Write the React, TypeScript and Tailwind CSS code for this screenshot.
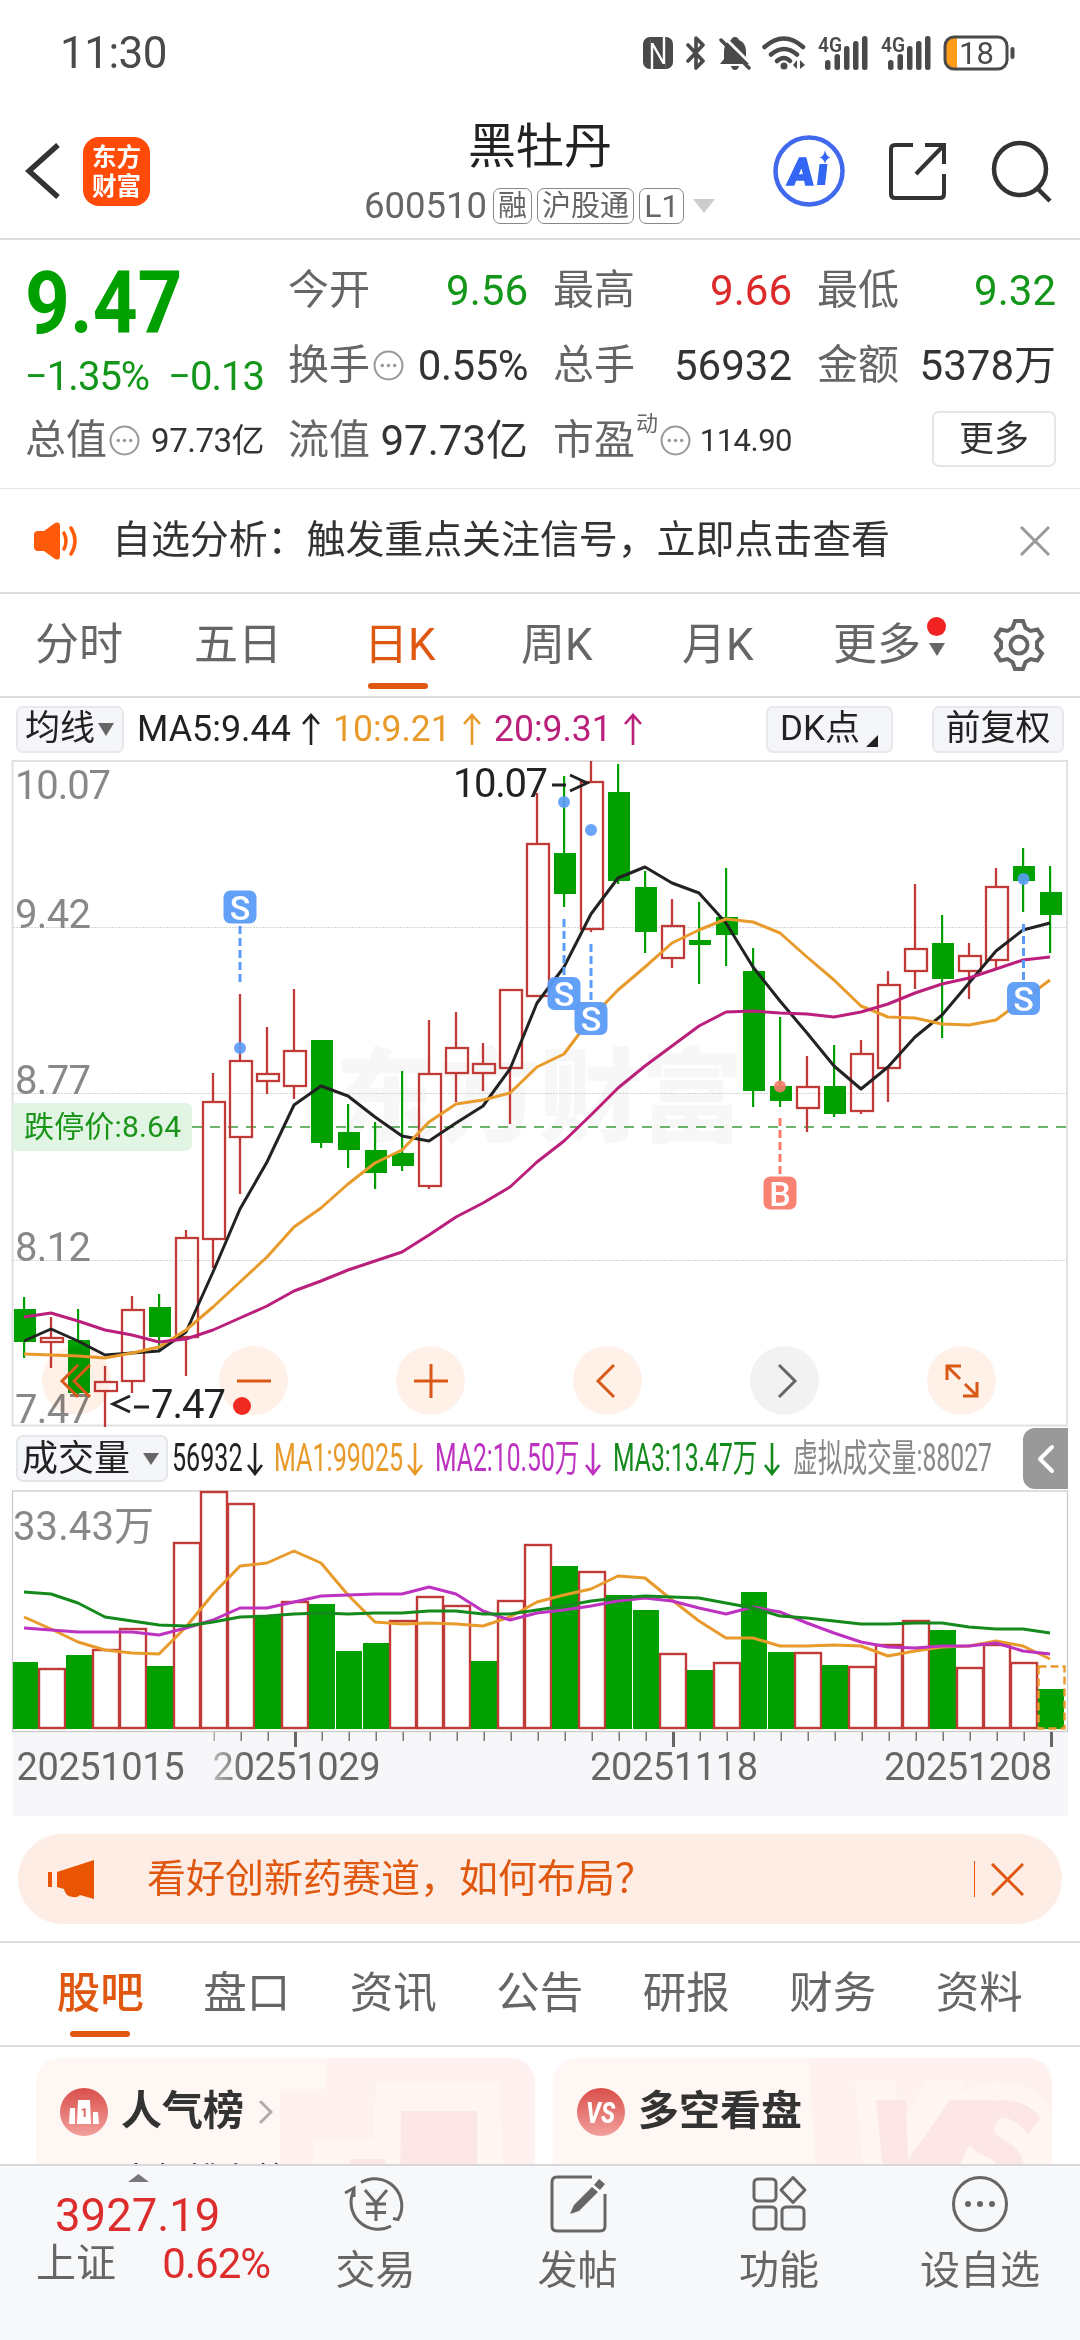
import type { ReactNode } from "react";

const GREEN = "#00a000";
const RED = "#c03a38";

// [kind, body top, body bottom, wick top, wick bottom]
type Candle = ["u" | "d", number, number, number, number];

const candles: Candle[] = [
  ["d", 1309, 1342, 1297, 1358],
  ["u", 1337, 1343, 1317, 1368],
  ["d", 1340, 1393, 1309, 1395],
  ["u", 1381, 1392, 1366, 1427],
  ["u", 1309, 1382, 1296, 1393],
  ["d", 1307, 1337, 1294, 1350],
  ["u", 1237, 1338, 1230, 1376],
  ["u", 1101, 1240, 1073, 1268],
  ["u", 1060, 1138, 994, 1194],
  ["u", 1073, 1082, 1027, 1094],
  ["u", 1050, 1087, 989, 1099],
  ["d", 1040, 1143, 1040, 1148],
  ["d", 1132, 1150, 1104, 1168],
  ["d", 1150, 1173, 1122, 1189],
  ["d", 1153, 1166, 1071, 1171],
  ["u", 1073, 1187, 1020, 1189],
  ["u", 1047, 1074, 1012, 1102],
  ["u", 1063, 1074, 1043, 1091],
  ["u", 989, 1069, 989, 1124],
  ["u", 843, 997, 793, 997],
  ["d", 853, 894, 776, 907],
  ["u", 781, 930, 761, 932],
  ["d", 792, 881, 764, 884],
  ["d", 887, 932, 871, 953],
  ["u", 925, 959, 899, 968],
  ["d", 940, 945, 902, 984],
  ["d", 917, 935, 868, 966],
  ["d", 971, 1091, 948, 1107],
  ["d", 1086, 1101, 1017, 1107],
  ["u", 1086, 1109, 1056, 1132],
  ["d", 1086, 1114, 1045, 1117],
  ["u", 1053, 1112, 1040, 1114],
  ["u", 984, 1069, 971, 1102],
  ["u", 948, 972, 884, 989],
  ["d", 943, 979, 915, 1038],
  ["u", 955, 972, 943, 999],
  ["u", 886, 961, 868, 968],
  ["d", 866, 881, 848, 912],
  ["d", 892, 915, 866, 953],
];

const ma5 = [
  1341, 1329, 1341, 1355, 1353, 1351, 1332, 1272, 1209, 1162, 1105, 1086, 1096,
  1117, 1136, 1141, 1123, 1106, 1069, 1003, 967, 914, 878, 867, 883, 893, 923,
  967, 1001, 1033, 1066, 1089, 1067, 1037, 1015, 983, 951, 930, 923,
];
const ma10 = [
  1354, 1355, 1356, 1358, 1353, 1347, 1330, 1307, 1282, 1257, 1227, 1208, 1184,
  1163, 1150, 1122, 1104, 1100, 1093, 1067, 1054, 1018, 990, 967, 943, 930, 919,
  922, 933, 957, 980, 1006, 1017, 1018, 1024, 1025, 1020, 1000, 980,
];
const ma20 = [
  1317, 1313, 1321, 1330, 1335, 1342, 1339, 1330, 1318, 1306, 1291, 1281, 1270,
  1261, 1252, 1235, 1217, 1203, 1187, 1162, 1141, 1115, 1088, 1066, 1046, 1026,
  1012, 1011, 1013, 1014, 1017, 1012, 1004, 993, 984, 978, 969, 960, 957,
];

const volumes = [
  1662, 1668, 1655, 1649, 1628, 1666, 1542, 1491, 1503, 1615, 1601, 1604, 1651,
  1643, 1620, 1596, 1605, 1661, 1600, 1544, 1566, 1571, 1595, 1610, 1653, 1670,
  1662, 1592, 1652, 1652, 1665, 1666, 1644, 1620, 1630, 1667, 1644, 1662, 1689,
];
// volume bars have their own colours, they do not always follow the candle
const volumeDown = new Set([
  0, 2, 5, 9, 11, 12, 13, 17, 20, 22, 23, 25, 27, 28, 30, 34, 38,
]);
const vma1 = [
  1617, 1629, 1642, 1650, 1653, 1654, 1627, 1594, 1566, 1563, 1551, 1563, 1595,
  1622, 1624, 1623, 1624, 1626, 1617, 1602, 1595, 1589, 1576, 1578, 1600, 1621,
  1638, 1638, 1646, 1646, 1645, 1646, 1656, 1651, 1647, 1646, 1641, 1646, 1659,
];
const vma2 = [
  1628, 1630, 1632, 1632, 1632, 1635, 1628, 1620, 1608, 1608, 1602, 1596, 1595,
  1594, 1594, 1587, 1594, 1611, 1620, 1613, 1610, 1606, 1601, 1598, 1601, 1608,
  1614, 1607, 1612, 1623, 1633, 1642, 1647, 1648, 1646, 1646, 1643, 1651, 1654,
];
const vma3 = [
  1592, 1594, 1603, 1617, 1621, 1625, 1626, 1622, 1617, 1616, 1614, 1613, 1614,
  1613, 1613, 1611, 1611, 1614, 1614, 1610, 1606, 1601, 1598, 1596, 1597, 1598,
  1603, 1608, 1616, 1618, 1621, 1624, 1624, 1623, 1623, 1627, 1629, 1629, 1633,
];

const cx = (i: number) => 24 + 27 * i;
const line = (ys: number[]) => ys.map((y, i) => `${cx(i)},${y}`).join(" ");

function Signal({
  x,
  y,
  dot,
  from,
  to,
  label,
  color,
}: {
  x: number;
  y: number;
  dot: number;
  from: number;
  to: number;
  label: string;
  color: string;
}) {
  return (
    <g>
      <line x1={x} x2={x} y1={from} y2={to} stroke={color} strokeWidth="3" strokeDasharray="8 4" />
      <circle cx={x} cy={dot} r="6" fill={color} opacity="0.9" />
      <rect x={x - 16.5} y={y - 16.5} width="33" height="33" rx="7" fill={color} opacity="0.95" />
      <text x={x} y={y + 12.5} textAnchor="middle" fontSize="34" fontWeight="500" fill="#fff">
        {label}
      </text>
    </g>
  );
}

function PriceChart() {
  return (
    <svg className="block h-[667px] w-[1080px]" viewBox="0 760 1080 667">
      <text x="335" y="1134" fontSize="102" fontWeight="900" fill="#f7f7f7" textLength="408">
        东方财富
      </text>
      <rect x="12.5" y="761" width="1054.5" height="664.5" fill="none" stroke="#e0e0e0" strokeWidth="2" />
      {[927.5, 1093.5, 1260.5].map((y) => (
        <line key={y} x1="13" x2="1067" y1={y} y2={y} stroke="#d4d4d4" strokeDasharray="2 1" strokeWidth="1" />
      ))}
      <line x1="192" x2="1066" y1="1127" y2="1127" stroke="#3d9a3d" strokeWidth="1.4" strokeDasharray="10 8" />

      {candles.map(([kind, top, bottom, high, low], i) =>
        kind === "d" ? (
          <g key={i} fill={GREEN}>
            <rect x={cx(i) - 1} y={high} width="2.2" height={low - high} />
            <rect x={cx(i) - 10} y={top} width="22" height={bottom - top} />
          </g>
        ) : (
          <g key={i} stroke={RED} strokeWidth="2.3" fill="none">
            <line x1={cx(i)} x2={cx(i)} y1={high} y2={top} />
            <line x1={cx(i)} x2={cx(i)} y1={bottom} y2={low} />
            <rect x={cx(i) - 10} y={top + 1} width="22" height={bottom - top - 2} />
          </g>
        ),
      )}

      <g fill="none" strokeWidth="3" strokeLinejoin="round">
        <polyline points={line(ma5)} stroke="#222" />
        <polyline points={line(ma10)} stroke="#e89a2b" />
        <polyline points={line(ma20)} stroke="#ba1f7c" />
      </g>

      <Signal x={240} y={907} dot={1048} from={926} to={982} label="S" color="#5b9bf8" />
      <Signal x={564} y={993.5} dot={802} from={919} to={975} label="S" color="#5b9bf8" />
      <Signal x={591} y={1018.5} dot={830} from={944} to={1000} label="S" color="#5b9bf8" />
      <Signal x={1023.5} y={998.5} dot={879} from={924} to={980} label="S" color="#5b9bf8" />
      <Signal x={780} y={1193} dot={1086.5} from={1118} to={1174} label="B" color="#f97b6b" />

      <g fontSize="40" fill="#888">
        <text x="15" y="799" textLength="96">10.07</text>
        <text x="15" y="927.5" textLength="76">9.42</text>
        <text x="15" y="1093.5" textLength="76">8.77</text>
        <text x="15" y="1260.5" textLength="76">8.12</text>
        <text x="15" y="1422.5" textLength="76">7.47</text>
      </g>
      <text x="453" y="797" fontSize="40" fill="#222" textLength="95">10.07</text>
      <path d="M552 785h14M570 775l17 8-17 8" fill="none" stroke="#222" strokeWidth="3" />
      <path d="M130 1396l-17 8 17 8M134 1407h15" fill="none" stroke="#222" strokeWidth="3" />
      <text x="151" y="1418" fontSize="40" fill="#222" textLength="75">7.47</text>

      <path d="M12.5 1103H185q7 0 7 7v34q0 7-7 7H12.5z" fill="#e2f4e3" />
      <text x="24" y="1137" fontSize="30" fill="#1a951a" textLength="157">跌停价:8.64</text>
    </svg>
  );
}

function RoundButton({ grey, children }: { grey?: boolean; children: ReactNode }) {
  return (
    <div className="relative flex size-[69px] items-center justify-center">
      <div
        className={`absolute inset-0 rounded-full mix-blend-multiply ${grey ? "bg-[#f2f2f2]" : "bg-[#fff0e8]"}`}
      />
      <svg
        className={`relative size-10 ${grey ? "text-[#666]" : "text-[#d95a16]"}`}
        viewBox="0 0 40 40"
        fill="none"
        stroke="currentColor"
        strokeWidth="3"
      >
        {children}
      </svg>
    </div>
  );
}

function VolumeChart() {
  const mid = (i: number) => 25 + 27 * i;
  const majors = [10, 24, 38];
  return (
    <svg className="block h-[326px] w-[1080px]" viewBox="0 1490 1080 326">
      <defs>
        <linearGradient id="fade" gradientUnits="userSpaceOnUse" x1="200" x2="245" y1="0" y2="0">
          <stop offset="0" stopColor="#666" stopOpacity="0.2" />
          <stop offset="1" stopColor="#666" />
        </linearGradient>
      </defs>
      <rect x="12.5" y="1732" width="1055.5" height="84" fill="#f7f7fa" />
      <rect x="12.5" y="1491" width="1055" height="240.5" fill="none" stroke="#c9c9c9" strokeWidth="1.2" />
      {volumes.map((top, i) =>
        volumeDown.has(i) ? (
          <rect key={i} x={Math.max(13, mid(i) - 13)} y={top} width={i === 0 ? 25 : 26} height={1729 - top} fill={GREEN} />
        ) : (
          <rect key={i} x={mid(i) - 13} y={top + 1} width="26" height={1728 - top - 1} fill="none" stroke={RED} strokeWidth="2.4" />
        ),
      )}
      <rect x="1038.5" y="1666.5" width="26" height="62" fill="none" stroke="#e89a2b" strokeWidth="2.4" strokeDasharray="8 4" />
      <g fill="none" strokeWidth="3" strokeLinejoin="round">
        <polyline points={line(vma1)} stroke="#e89a2b" />
        <polyline points={line(vma2)} stroke="#bd32c0" />
        <polyline points={line(vma3)} stroke="#148a1c" />
      </g>
      {volumes.map((_, i) =>
        i < 7 ? null : majors.includes(i) ? (
          <rect key={i} x={mid(i) - 1} y="1732" width="3" height="15" fill="#666" />
        ) : (
          <rect key={i} x={mid(i) - 0.5} y="1732" width="1.5" height="9" fill={i === 7 ? "#aaa" : "#777"} />
        ),
      )}
      <text x="13" y="1540" fontSize="40" fill="#888" textLength="141">33.43万</text>
      <g fontSize="38" fill="#666">
        <text x="16.5" y="1780" textLength="168">20251015</text>
        <text x="212.5" y="1780" textLength="168" fill="url(#fade)">20251029</text>
        <text x="590" y="1780" textLength="168">20251118</text>
        <text x="884" y="1780" textLength="168">20251208</text>
      </g>
    </svg>
  );
}

// Text pressed sideways into the given width.
function Narrow({ box, scale, children }: { box: string; scale: string; children: ReactNode }) {
  return (
    <div className={`whitespace-nowrap ${box}`}>
      <span className={`inline-block origin-left ${scale}`}>{children}</span>
    </div>
  );
}

function Dots() {
  return (
    <svg className="size-[31px] shrink-0" viewBox="0 0 30 30" fill="#999">
      <circle cx="15" cy="15" r="13.5" fill="none" stroke="#999" strokeWidth="2" />
      <circle cx="9" cy="15" r="1.7" />
      <circle cx="15" cy="15" r="1.7" />
      <circle cx="21" cy="15" r="1.7" />
    </svg>
  );
}

function Signal4G() {
  return (
    <svg className="h-[34px] w-[50px] overflow-visible" viewBox="0 0 50 34" fill="#4a4a4a">
      <text x="0" y="15.5" fontSize="21" fontWeight="600" textLength="24" lengthAdjust="spacingAndGlyphs">4G</text>
      <rect x="7" y="24" width="5.5" height="10" rx="2.5" />
      <rect x="16.5" y="18" width="5.5" height="16" rx="2.5" />
      <rect x="26" y="10" width="5.5" height="24" rx="2.5" />
      <rect x="35" y="5" width="5.5" height="29" rx="2.5" />
      <rect x="44" y="0" width="5.5" height="34" rx="2.5" />
    </svg>
  );
}

function StatusBar() {
  return (
    <div className="flex h-[105px] shrink-0 items-center justify-between pr-[64px] pl-[60px] text-[#4a4a4a]">
      <span className="text-[44px] tracking-[-0.5px]">11:30</span>
      <div className="flex items-center">
        <svg className="h-[32px] w-[30px]" viewBox="0 0 30 32">
          <rect width="30" height="32" rx="7" fill="#4a4a4a" />
          <path d="M9 32V6l12 21V0" fill="none" stroke="#fff" strokeWidth="2.4" />
          <path d="M9 0v6M21 27v5" stroke="#4a4a4a" strokeWidth="2.4" />
        </svg>
        <svg className="ml-[13px] h-[34px] w-[20px]" viewBox="0 0 20 34" fill="none" stroke="#4a4a4a" strokeWidth="3.6" strokeLinejoin="round" strokeLinecap="round">
          <path d="M2 9l15 16-7 7V2l7 7L2 25" />
        </svg>
        <svg className="ml-[13px] h-[34px] w-[32px]" viewBox="0 0 32 34" fill="#4a4a4a">
          <path d="M12 4q1-3 4-3t4 3q7 3 7 11v8l4 5H1l4-5v-8q0-8 7-11z" />
          <path d="M12 30h8q-1 4-4 4t-4-4z" />
          <path d="M3 -1l33 33" stroke="#fff" strokeWidth="3" />
          <path d="M2 4l28 28" stroke="#4a4a4a" strokeWidth="3.5" strokeLinecap="round" />
        </svg>
        <svg className="ml-[11px] h-[34px] w-[44px]" viewBox="0 0 44 34" fill="none" stroke="#4a4a4a" strokeWidth="4.5" strokeLinecap="round">
          <path d="M2.5 11Q22-6 41 11M9 18.500q13-11 26 0M15 25q7-6 13 0" />
          <circle cx="22" cy="30" r="3.5" fill="#4a4a4a" stroke="none" />
          <path d="M35 24v9l-4-4zM38 33v-9l5 5z" fill="#4a4a4a" stroke="none" />
        </svg>
        <span className="ml-[12px]"><Signal4G /></span>
        <span className="ml-[13px]"><Signal4G /></span>
        <svg className="ml-[12px] h-[36px] w-[73px]" viewBox="0 0 73 36" fill="none">
          <path d="M14 2h-3Q2 2 2 11v14q0 9 9 9h3z" fill="#ff9c1a" />
          <rect x="2" y="2" width="62" height="32" rx="9" stroke="#4a4a4a" strokeWidth="3" />
          <path d="M69.5 14v8" stroke="#4a4a4a" strokeWidth="4" strokeLinecap="round" />
          <text x="16" y="29" fontSize="31" fill="#4a4a4a">18</text>
        </svg>
      </div>
    </div>
  );
}

function Tag({ children }: { children: ReactNode }) {
  return (
    <span className="flex h-[36px] items-center rounded-[7px] border-[1.5px] border-[#888] px-[4px] text-[29px] leading-none">
      {children}
    </span>
  );
}

function Header() {
  return (
    <div className="flex h-[135px] shrink-0 items-start border-b-2 border-[#dcdcdc] text-[#222]">
      <svg className="mt-[38px] ml-[25px] h-[56px] w-[36px]" viewBox="0 0 36 56" fill="none" stroke="#333" strokeWidth="5.5">
        <path d="M33 2L4 28l29 26" />
      </svg>
      <div className="mt-[32px] ml-[22px] flex h-[69px] w-[67px] flex-col items-center justify-center rounded-[16px] bg-[#ff4a08] text-[24.5px] leading-[29px] font-bold text-white">
        <span>东方</span>
        <span>财富</span>
      </div>
      <div className="ml-[214px] flex w-[353px] flex-col">
        <div className="mt-[10px] ml-[104px] text-[48px] leading-[64px]">黑牡丹</div>
        <div className="mt-[8px] flex h-[38px] items-center gap-[5px] text-[#666]">
          <span className="mr-[1px] text-[36.5px] leading-none">600510</span>
          <Tag>融</Tag>
          <Tag>沪股通</Tag>
          <Tag><span className="text-[32px]">L1</span></Tag>
          <svg className="ml-[4px] h-[14px] w-[22px] shrink-0" viewBox="0 0 22 14" fill="#ccc">
            <path d="M0 0h22L11 14z" />
          </svg>
        </div>
      </div>
      <svg className="mt-[30px] ml-[56px] size-[72px]" viewBox="0 0 72 72">
        <circle cx="36" cy="36" r="33.5" fill="#fff" stroke="#4169ee" strokeWidth="4.5" />
        <text x="14" y="50" fontSize="38" fontWeight="900" fill="#3366f5" stroke="#3366f5" strokeWidth="1.5" textLength="26" lengthAdjust="spacingAndGlyphs" transform="skewX(-6) translate(5 0)">
          A
        </text>
        <path d="M46.5 29h8l-2.500 21h-8z" fill="#3366f5" />
        <path d="M52 15q1 6.500 5.500 7.500-4.500 1-5.500 6.500-1-5.500-5.500-6.500Q51 21.500 52 15z" fill="#3366f5" />
      </svg>
      <svg className="mt-[36px] ml-[43px] size-[60px]" viewBox="0 0 60 60" fill="none" stroke="#333" strokeWidth="4">
        <path d="M25 4H7Q3 4 3 8v45q0 4 4 4h45q4 0 4-4V33" />
        <path d="M37 4h19v19M56 4L28 33" />
      </svg>
      <svg className="mt-[34px] ml-[43px] size-[64px]" viewBox="0 0 64 64" fill="none" stroke="#333" strokeWidth="4.5">
        <circle cx="29" cy="30" r="26" />
        <path d="M46 49l13 13" />
      </svg>
    </div>
  );
}

function Quote() {
  return (
    <div className="flex h-[249px] shrink-0 border-b border-[#e6e6e6] pt-[13px] pl-[25px] text-[42px] leading-[75px] text-[#333]">
      <div className="w-[239px]">
        <div className="h-[97px] pt-[4px] text-[88px] leading-[92px] font-bold text-[#00a000]">
          <Narrow box="w-[160px]" scale="scale-x-[0.89]">9.47</Narrow>
        </div>
        <div className="flex h-[53px] items-center justify-between text-[40px] tracking-[-1px] text-[#14961a]">
          <span>−1.35%</span>
          <span>−0.13</span>
        </div>
        <div className="flex h-[75px] items-center">
          <span className="text-[41px] text-[#666]">总值</span>
          <span className="ml-[2px] flex"><Dots /></span>
          <span className="ml-auto text-[33px] tracking-[-0.5px]">97.73亿</span>
        </div>
      </div>
      <div className="ml-[24px] w-[240px]">
        <div className="flex justify-between">
          <span className="text-[41px] text-[#666]">今开</span>
          <span className="text-[#14961a]">9.56</span>
        </div>
        <div className="flex items-center">
          <span className="text-[41px] text-[#666]">换手</span>
          <span className="ml-[3px] flex"><Dots /></span>
          <span className="ml-auto tracking-[-0.5px]">0.55%</span>
        </div>
        <div className="flex justify-between">
          <span className="text-[41px] text-[#666]">流值</span>
          <span>97.73亿</span>
        </div>
      </div>
      <div className="ml-[25px] w-[239px]">
        <div className="flex justify-between">
          <span className="text-[41px] text-[#666]">最高</span>
          <span className="text-[#dc2a2a]">9.66</span>
        </div>
        <div className="flex justify-between">
          <span className="text-[41px] text-[#666]">总手</span>
          <span>56932</span>
        </div>
        <div className="flex h-[75px] items-center">
          <span className="text-[41px] text-[#666]">市盈</span>
          <span className="mr-[2px] mb-[34px] ml-[1px] text-[22px] leading-none text-[#666]">动</span>
          <Dots />
          <span className="ml-auto text-[31px] tracking-[-0.5px]">114.90</span>
        </div>
      </div>
      <div className="ml-[25px] w-[239px]">
        <div className="flex justify-between">
          <span className="text-[41px] text-[#666]">最低</span>
          <span className="text-[#14961a]">9.32</span>
        </div>
        <div className="flex justify-between">
          <span className="text-[41px] text-[#666]">金额</span>
          <span>5378万</span>
        </div>
        <div className="mt-[8px] ml-auto flex h-[56px] w-[124px] items-center justify-center rounded-[7px] border-2 border-[#e6e6e6] text-[35px]">
          更多
        </div>
      </div>
    </div>
  );
}

function Notice() {
  return (
    <div className="flex h-[105px] shrink-0 items-center border-b-2 border-[#dcdcdc] pr-[30px] pl-[33px]">
      <svg className="h-[38px] w-[46px]" viewBox="0 0 46 38" fill="#ff5a0a">
        <path d="M5 9h6L22 1q5-2 5 3v30q0 5-5 3l-11-8H5q-4 0-4-4V13q0-4 4-4z" />
        <path d="M31 11q4 8 0 16M38 6q8 13 0 26" fill="none" stroke="#ff5a0a" strokeWidth="3.5" strokeLinecap="round" />
      </svg>
      <span className="ml-[33px] text-[39px] tracking-[-0.1px] text-[#333]">自选分析：触发重点关注信号，立即点击查看</span>
      <svg className="ml-auto size-[30px]" viewBox="0 0 30 30" stroke="#999" strokeWidth="3">
        <path d="M1 1l28 28M29 1L1 29" />
      </svg>
    </div>
  );
}

function PeriodTabs() {
  return (
    <div className="flex h-[104px] shrink-0 items-center border-b-2 border-[#dcdcdc] pl-[35px] text-[44px] text-[#666]">
      <span className="w-[159px]">分时</span>
      <span className="w-[170px]">五日</span>
      <div className="relative flex w-[157px] text-[#e0570f]">
        日K
        <div className="absolute -bottom-[11px] left-[4px] h-[6px] w-[60px] rounded-full bg-[#e0570f]" />
      </div>
      <span className="w-[161px]">周K</span>
      <span className="w-[151px]">月K</span>
      <span>更多</span>
      <div className="ml-[6px] flex h-[56px] flex-col items-center">
        <div className="size-[19px] rounded-full bg-[#f02222]" />
        <svg className="mt-[7px] h-[13px] w-[16px]" viewBox="0 0 16 13" fill="#666">
          <path d="M0 0h16L8 13z" />
        </svg>
      </div>
      <svg className="ml-[47px] h-[54px] w-[52px]" viewBox="0 0 52 54" fill="none" stroke="#666" strokeWidth="4">
        <path d="M22 3h8l2.500 7 5 3 7-1.500 4.500 7-5 5.500v6l5 5.500-4.500 7-7-1.500-5 3L30 51h-8l-2.500-7-5-3-7 1.500-4.500-7L8 30v-6l-5-5.500 4.500-7 7 1.500 5-3z" />
        <circle cx="26" cy="27" r="8.5" />
      </svg>
    </div>
  );
}

function MaRow() {
  return (
    <div className="flex h-[62px] shrink-0 items-center px-[16px] text-[37px] whitespace-nowrap">
      <div className="flex h-[47px] w-[108px] items-center rounded-[7px] border-2 border-[#e8e8ec] bg-[#f5f6f9] pl-[7px] text-[35px] text-[#222]">
        均线
        <svg className="ml-[3px] h-[13px] w-[16px]" viewBox="0 0 16 13" fill="#666">
          <path d="M0 0h16L8 13z" />
        </svg>
      </div>
      <div className="ml-[13px] flex w-[196px] items-center text-[#222]">
        <Narrow box="w-[164px]" scale="scale-x-[0.97]">MA5:9.44</Narrow>
        <Arrow up />
      </div>
      <div className="flex w-[161px] items-center text-[#e89a2b]">
        <Narrow box="w-[129px]" scale="scale-x-[0.96]">10:9.21</Narrow>
        <Arrow up />
      </div>
      <div className="flex w-[160px] items-center text-[#ba1f7c]">
        <Narrow box="w-[129px]" scale="scale-x-[0.96]">20:9.31</Narrow>
        <Arrow up />
      </div>
      <div className="ml-auto flex h-[47px] w-[127px] items-center rounded-[7px] border-2 border-[#e8e8ec] bg-[#f5f6f9] pl-[12px] text-[35px] text-[#222]">
        DK点
        <svg className="mt-[24px] ml-[6px] size-[12px]" viewBox="0 0 12 12" fill="#222">
          <path d="M12 0v12H0z" />
        </svg>
      </div>
      <div className="ml-[39px] flex h-[47px] w-[132px] items-center justify-center rounded-[7px] border-2 border-[#e8e8ec] bg-[#f5f6f9] text-[35px] text-[#222]">
        前复权
      </div>
    </div>
  );
}

function Arrow({ up }: { up?: boolean }) {
  return (
    <svg className="h-[34px] w-[20px] shrink-0" viewBox="0 0 20 34" fill="none" stroke="currentColor" strokeWidth="2.600">
      <path d={up ? "M10 33V3M2 12l8-9 8 9" : "M10 1v30M3 23l7 9 7-9"} />
    </svg>
  );
}

function VolumeRow() {
  return (
    <div className="flex h-[63px] shrink-0 items-center pl-[16px] text-[38px] whitespace-nowrap">
      <div className="flex h-[47px] w-[152px] items-center rounded-[7px] border-2 border-[#e4e6ea] bg-[#f5f6f9] pl-[4px] text-[36px] text-[#222]">
        成交量
        <svg className="ml-[13px] h-[12px] w-[16px]" viewBox="0 0 16 12" fill="#666">
          <path d="M0 0h16L8 12z" />
        </svg>
      </div>
      <div className="ml-[4px] flex items-center text-[#222]">
        <Narrow box="w-[73px]" scale="scale-x-[0.66]">56932</Narrow>
        <Arrow />
      </div>
      <div className="ml-[9px] flex items-center text-[#e89a2b]">
        <Narrow box="w-[131px]" scale="scale-x-[0.66]">MA1:99025</Narrow>
        <Arrow />
      </div>
      <div className="ml-[10px] flex items-center text-[#bd32c0]">
        <Narrow box="w-[148px]" scale="scale-x-[0.65]">MA2:10.50万</Narrow>
        <Arrow />
      </div>
      <div className="ml-[10px] flex items-center text-[#148a1c]">
        <Narrow box="w-[149px]" scale="scale-x-[0.65]">MA3:13.47万</Narrow>
        <Arrow />
      </div>
      <div className="ml-[11px] text-[#888]">
        <Narrow box="w-[200px]" scale="scale-x-[0.65]">虚拟成交量:88027</Narrow>
      </div>
      <div className="mr-[12px] ml-auto flex h-[61px] w-[45px] items-center justify-center rounded-l-[12px] bg-[#999]">
        <svg className="h-[30px] w-[18px]" viewBox="0 0 18 30" fill="none" stroke="#fff" strokeWidth="4" strokeLinecap="round" strokeLinejoin="round">
          <path d="M15 3L3 15l12 12" />
        </svg>
      </div>
    </div>
  );
}

function Banner() {
  return (
    <div className="mx-[18px] mt-[18px] flex h-[90px] shrink-0 items-center rounded-full bg-[#fdede4] pr-[38px] pl-[30px] text-[#e0570f]">
      <svg className="h-[39px] w-[46px]" viewBox="0 0 46 39" fill="#ea5504">
        <rect x="0" y="12" width="4" height="15" />
        <path d="M9 12L46 0v39l-14-4q-3 3-7 2-8-1-9-8l-7-2z" />
      </svg>
      <span className="ml-[53px] text-[39px]">看好创新药赛道，如何布局？</span>
      <div className="ml-auto h-[36px] w-[1.5px] bg-[#e0570f]" />
      <svg className="ml-[16px] size-[33px]" viewBox="0 0 33 33" stroke="#e0570f" strokeWidth="3">
        <path d="M1 1l31 31M32 1L1 32" />
      </svg>
    </div>
  );
}

const sections = ["股吧", "盘口", "资讯", "公告", "研报", "财务", "资料"];

function SectionTabs() {
  return (
    <div className="mt-[17px] flex h-[106px] shrink-0 items-center border-y-2 border-[#dcdcdc] px-[27px] text-[43.5px] text-[#666]">
      {sections.map((name, i) => (
        <div
          key={name}
          className={`relative flex w-[146.5px] justify-center ${i === 0 ? "font-medium text-[#e0570f]" : ""}`}
        >
          {name}
          {i === 0 && <div className="absolute -bottom-[10px] h-[6px] w-[60px] rounded-full bg-[#e0570f]" />}
        </div>
      ))}
    </div>
  );
}

function Cards() {
  return (
    <div className="flex h-[117px] shrink-0 gap-[18px] overflow-hidden pt-[11px] pl-[36px] text-[41px] font-bold text-[#333]">
      <div className="relative h-[200px] w-[499px] shrink-0 overflow-hidden rounded-[24px] bg-[#fff7f4]">
        <svg className="absolute inset-0 h-[200px] w-[499px]" viewBox="0 0 499 200">
          <path d="M291 0h208v200H244V31h45z" fill="#fef1ef" />
          <path d="M340 24h124l6 176H278V81h59z" fill="#fff6f3" />
          <path d="M365 53h76v147h-78zM314 101h35v99h-36z" fill="#fce7e6" />
        </svg>
        <div className="relative mt-[30px] ml-[24px] flex h-[48px] items-center">
          <svg className="size-[48px]" viewBox="0 0 48 48">
            <defs>
              <linearGradient id="badge" x1="0" x2="0" y1="0" y2="1">
                <stop offset="0" stopColor="#da4f4a" />
                <stop offset="1" stopColor="#f2a09c" />
              </linearGradient>
            </defs>
            <circle cx="24" cy="24" r="24" fill="url(#badge)" />
            <path d="M10 20h5v16H9zM18 12h12l1 24H17zM33 24h5l1 12h-6z" fill="#fff" />
            <text x="20.5" y="29" fontSize="13" fontWeight="700" fill="#dc6560">1</text>
          </svg>
          <span className="ml-[13px]">人气榜</span>
          <svg className="ml-[15px] h-[24px] w-[14px]" viewBox="0 0 14 24" fill="none" stroke="#b0aaaa" strokeWidth="3" strokeLinecap="round">
            <path d="M2 2l10 10L2 22" />
          </svg>
        </div>
        <div className="relative mt-[24px] ml-[83px] text-[34px] leading-[40px] font-normal">人气排名第</div>
      </div>
      <div className="relative h-[200px] w-[499px] shrink-0 overflow-hidden rounded-[24px] bg-[#fff7f4]">
        <svg className="absolute inset-0 h-[200px] w-[499px]" viewBox="0 0 499 200">
          <path d="M256 0h243v200H268z" fill="#fef1ef" />
          <path d="M302 22h40l4 50 26-50h40l-4 12q30-16 62-6 28 10 29 40v60H312z" fill="#fff6f3" />
          <path d="M323 42h30l2 60 42-60h42l-50 100h-56z" fill="#fce7e6" />
          <path d="M488 60q-14-18-38-18-34 0-36 32-1 16 18 24 16 7 15 18-3 14-22 14-16 0-24-10l-8 30q40 22 66-4 22-22 8-50-6-10-22-18-8-6 0-16 10-8 30 14z" fill="#fce7e6" />
        </svg>
        <div className="relative mt-[30px] ml-[24px] flex h-[48px] items-center">
          <svg className="size-[48px]" viewBox="0 0 48 48">
            <circle cx="24" cy="24" r="24" fill="url(#badge)" />
            <text x="9" y="35" fontSize="29" fontWeight="800" fontStyle="italic" fill="#fff" textLength="29" lengthAdjust="spacingAndGlyphs">VS</text>
          </svg>
          <span className="ml-[13px]">多空看盘</span>
        </div>
      </div>
    </div>
  );
}

function NavItem({ width, label, children }: { width: string; label: string; children: ReactNode }) {
  return (
    <div className={`flex flex-col items-center ${width}`}>
      <svg className="mt-[8px] size-[60px] overflow-visible" viewBox="0 0 60 60" fill="none" stroke="#666" strokeWidth="3">
        {children}
      </svg>
      <span className="mt-[11px] text-[40px] leading-[52px]">{label}</span>
    </div>
  );
}

function BottomBar() {
  return (
    <div className="flex h-[176px] shrink-0 border-t-2 border-[#d8d8da] bg-[#f7f8fa] text-[#666]">
      <div className="w-[274px] pl-[36px]">
        <svg className="mt-[8px] ml-[92px] h-[8px] w-[21px]" viewBox="0 0 21 8" fill="#77777c">
          <path d="M0 8L10.500 0 21 8z" />
        </svg>
        <div className="mt-[9px] ml-[19px] text-[45.5px] leading-[50px] text-[#dc2c2c]">3927.19</div>
        <div className="-mt-[3px] flex justify-between pr-[4px] text-[40px] leading-[52px]">
          <span>上证</span>
          <span className="text-[42px] tracking-[-1px] text-[#dc2c2c]">0.62%</span>
        </div>
      </div>
      <NavItem width="w-[203px]" label="交易">
        <path d="M15 8.500a27 27 0 0 1 37 37l-5-1M45 52a27 27 0 0 1-37-36M-1 19l9-5v9" />
        <path d="M19 16l11 13 11-13M30 29v18M20 30h20M20 38.500h20" />
      </NavItem>
      <NavItem width="w-[201px]" label="发帖">
        <path d="M44 3H9Q4 3 4 8v44q0 5 5 5h43q5 0 5-5V20" />
        <path d="M51 5l6 5-5 6-6-5zM44 13l6 5-19 19-9 3 4-9z" fill="#666" stroke="none" />
      </NavItem>
      <NavItem width="w-[202px]" label="功能">
        <rect x="5" y="5" width="22" height="22" rx="4" />
        <path d="M44 3.500L56 16 44 28.500 32 16z" strokeLinejoin="round" />
        <rect x="5" y="33" width="22" height="22" rx="4" />
        <rect x="33" y="33" width="22" height="22" rx="4" />
      </NavItem>
      <NavItem width="w-[200px]" label="设自选">
        <circle cx="30" cy="30" r="26.5" />
        <g fill="#666" stroke="none">
          <circle cx="18" cy="30" r="3" />
          <circle cx="30" cy="30" r="3" />
          <circle cx="42" cy="30" r="3" />
        </g>
      </NavItem>
    </div>
  );
}

export default function App() {
  return (
    <div className="flex h-[2340px] w-[1080px] flex-col overflow-hidden bg-white font-['Roboto','Noto_Sans_CJK_SC',sans-serif]">
      <StatusBar />
      <Header />
      <Quote />
      <Notice />
      <PeriodTabs />
      <MaRow />
      <div className="relative shrink-0">
        <PriceChart />
        <div className="absolute bottom-[12px] left-[42px] flex gap-[108px]">
          <RoundButton>
            <path d="M21 4L5 20l16 16M33 4L17 20l16 16" />
          </RoundButton>
          <RoundButton>
            <path d="M3 20h34" />
          </RoundButton>
          <RoundButton>
            <path d="M3 20h34M20 3v34" />
          </RoundButton>
          <RoundButton>
            <path d="M26 4L10 20l16 16" />
          </RoundButton>
          <RoundButton grey>
            <path d="M14 4l16 16-16 16" />
          </RoundButton>
          <RoundButton>
            <path d="M5 19V5h14M5 5l13 13M35 21v14H21M35 35L23 23" />
          </RoundButton>
        </div>
        <div className="absolute bottom-[12px] left-[233px] size-[18px] rounded-full bg-[#f02a22]" />
      </div>
      <VolumeRow />
      <VolumeChart />
      <Banner />
      <SectionTabs />
      <Cards />
      <BottomBar />
    </div>
  );
}
